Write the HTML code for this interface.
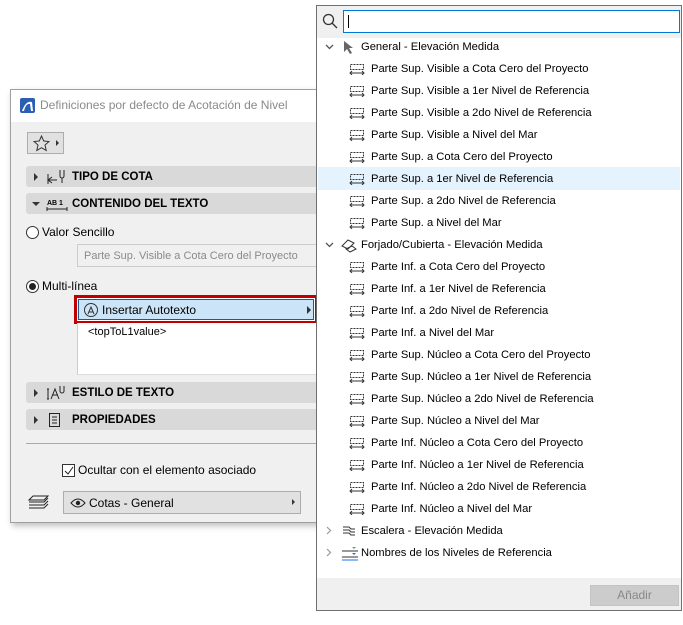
<!DOCTYPE html>
<html><head><meta charset="utf-8"><style>
*{margin:0;padding:0;box-sizing:border-box}
body{width:683px;height:625px;background:#fff;position:relative;overflow:hidden;font-family:"Segoe UI","Liberation Sans",sans-serif;font-size:12px;color:#000}
.a{position:absolute}
.dlg{left:10px;top:89px;width:320px;height:434px;background:#f0f0f0;border:1px solid #a0a0a0;box-shadow:2px 3px 6px rgba(0,0,0,.25)}
.ttl{left:0;top:0;width:100%;height:32px;background:#fff}
.hdr{position:absolute;left:15px;width:310px;height:21px;background:#d9d9d9;border-radius:3px;font-weight:bold;font-size:11.5px;line-height:23px}
.tri{position:absolute;left:8px;top:7px;width:0;height:0;border-left:4px solid #333;border-top:4px solid transparent;border-bottom:4px solid transparent}
.trd{position:absolute;left:6px;top:9px;width:0;height:0;border-top:4px solid #333;border-left:4px solid transparent;border-right:4px solid transparent}
.pop{left:316px;top:5px;width:366px;height:606px;background:#fff;border:1px solid #707070}
.row{position:absolute;left:0;width:364px;height:22px;line-height:22px;font-size:11.2px}
.row span{position:absolute;left:54px}
.grp span{left:44px}
</style></head><body>
<div class="a dlg">
 <div class="a ttl">
  <svg class="a" style="left:9px;top:8px" width="15" height="15"><rect width="15" height="15" rx="2" fill="#2a5fb4"/><path d="M2 13 Q6 2 12 4 L13 13 L11 13 L10 6 Q6 5 4 13Z" fill="#fff"/></svg>
  <div class="a" style="left:29px;top:8px;color:#8a8a8a;font-size:12px">Definiciones por defecto de Acotación de Nivel</div>
 </div>
 <div class="a" style="left:16px;top:42px;width:37px;height:22px;border:1px solid #adadad;background:#e1e1e1">
  <svg class="a" style="left:5px;top:2px" width="17" height="17"><path d="M8.5 1 L10.7 6 L16 6.5 L12 10 L13.2 15.5 L8.5 12.7 L3.8 15.5 L5 10 L1 6.5 L6.3 6Z" fill="none" stroke="#333"/></svg>
  <div class="tri" style="left:28px;top:7px;border-left-width:3px;border-top-width:3px;border-bottom-width:3px"></div>
 </div>
 <div class="hdr" style="top:76px"><div class="tri"></div>
  <svg class="a" style="left:20px;top:3px" width="22" height="16"><path d="M2 5v10M2 11h9M6 8l-4 3 4 3M14 1v6a2 2 0 0 0 4 0V1M16 9v5" fill="none" stroke="#222"/></svg>
  <span style="position:absolute;left:46px">TIPO DE COTA</span></div>
 <div class="hdr" style="top:103px"><div class="trd"></div>
  <svg class="a" style="left:20px;top:3px" width="22" height="16"><text x="1" y="9" font-size="7" font-family="Liberation Sans">AB 1</text><path d="M1 13h20M1 11v4M21 11v4" stroke="#222" fill="none"/></svg>
  <span style="position:absolute;left:46px">CONTENIDO DEL TEXTO</span></div>
 <div class="a" style="left:15px;top:136px;width:13px;height:13px;border:1px solid #333;border-radius:50%;background:#fff"></div>
 <div class="a" style="left:31px;top:135px">Valor Sencillo</div>
 <div class="a" style="left:66px;top:154px;width:260px;height:23px;border:1px solid #ccc;background:#f0f0f0;color:#8a8a8a;font-size:11px;line-height:23px;padding-left:6px">Parte Sup. Visible a Cota Cero del Proyecto</div>
 <div class="a" style="left:15px;top:190px;width:13px;height:13px;border:1px solid #333;border-radius:50%;background:#fff"><div class="a" style="left:2px;top:2px;width:7px;height:7px;border-radius:50%;background:#222"></div></div>
 <div class="a" style="left:31px;top:189px">Multi-línea</div>
 <div class="a" style="left:63px;top:205px;width:244px;height:29px;border:3px solid #c00000;background:#fff">
  <div class="a" style="left:1px;top:1px;width:236px;height:21px;background:#cce4f7;border:1px solid #1f5a8f">
   <svg class="a" style="left:4px;top:2px" width="16" height="16"><circle cx="8" cy="8" r="6.5" fill="none" stroke="#333"/><path d="M5 12l3-7 3 7M6 10h4" stroke="#333" fill="none"/></svg>
   <span style="position:absolute;left:23px;top:3px">Insertar Autotexto</span>
   <div class="tri" style="left:228px;top:6px"></div>
  </div>
 </div>
 <div class="a" style="left:66px;top:233px;width:260px;height:52px;background:#fff;border-left:1px solid #ccc;border-bottom:1px solid #ddd"><span style="position:absolute;left:10px;top:3px;font-size:11px">&lt;topToL1value&gt;</span></div>
 <div class="hdr" style="top:292px"><div class="tri"></div>
  <svg class="a" style="left:20px;top:3px" width="22" height="16"><path d="M2 4v10M1 4h2M1 14h2M5 14l4-10 4 10M6 10h6M14 1v5a2 2 0 0 0 4 0V1" stroke="#222" fill="none"/></svg>
  <span style="position:absolute;left:46px">ESTILO DE TEXTO</span></div>
 <div class="hdr" style="top:319px"><div class="tri"></div>
  <svg class="a" style="left:22px;top:3px" width="14" height="16"><rect x="1.5" y="1.5" width="10" height="13" fill="none" stroke="#222"/><path d="M4 5h5M4 8h5M4 11h5" stroke="#222"/></svg>
  <span style="position:absolute;left:46px">PROPIEDADES</span></div>
 <div class="a" style="left:15px;top:353px;width:310px;height:1px;background:#aaa"></div>
 <div class="a" style="left:51px;top:374px;width:13px;height:13px;border:1px solid #333;background:#fff"><svg class="a" style="left:1px;top:1px" width="10" height="10"><path d="M1 5l3 3 5-7" stroke="#222" fill="none"/></svg></div>
 <div class="a" style="left:67px;top:373px">Ocultar con el elemento asociado</div>
 <svg class="a" style="left:17px;top:404px" width="22" height="16"><path d="M5 2h15l-4 4H1zM1 8h15l4-4M1 11h15l4-4M1 14h15l4-4" stroke="#222" fill="none"/></svg>
 <div class="a" style="left:52px;top:401px;width:238px;height:23px;border:1px solid #adadad;background:#e1e1e1">
  <svg class="a" style="left:6px;top:5px" width="16" height="12"><path d="M1 6Q8-2 15 6Q8 14 1 6Z" fill="none" stroke="#222"/><circle cx="8" cy="6" r="2.2" fill="#222"/></svg>
  <span style="position:absolute;left:25px;top:4px">Cotas - General</span>
  <div class="tri" style="left:228px;top:7px;border-left-width:3px;border-top-width:3px;border-bottom-width:3px"></div>
 </div>
</div>

<div class="a pop">
 <div class="a" style="left:0;top:0;width:364px;height:32px;background:#f0f0f0"></div>
 <svg class="a" style="left:5px;top:7px" width="16" height="16"><circle cx="6.5" cy="6.5" r="5" fill="none" stroke="#333" stroke-width="1.3"/><path d="M10 10l5 5" stroke="#333" stroke-width="1.3"/></svg>
 <div class="a" style="left:26px;top:4px;width:337px;height:23px;border:1px solid #0078d7;background:#fff"><div class="a" style="left:4px;top:4px;width:1px;height:13px;background:#000"></div></div>
 <div class="a" style="left:1px;top:161px;width:362px;height:23px;background:#e5f3ff"></div>
 <div id="rows"></div>
 <div class="a" style="left:0;top:572px;width:364px;height:32px;background:#f0f0f0"></div>
 <div class="a" style="left:273px;top:579px;width:89px;height:21px;border:1px solid #c4c4c4;background:#ccc;color:#888;text-align:center;line-height:19px">Añadir</div>
</div>
<script>
var ic='<svg width="16" height="12"><path d="M1.5 1.5h13v5h-13z" fill="none" stroke="#333" stroke-dasharray="2 1"/><path d="M1 10h14M3 8l-2 2 2 2M13 8l2 2-2 2" stroke="#333" fill="none"/></svg>';
var chv='<svg style="position:absolute;left:8px;top:8px" width="9" height="6"><path d="M1 1l3.5 3.5L8 1" stroke="#555" fill="none" stroke-width="1.3"/></svg>';
var chr='<svg style="position:absolute;left:9px;top:6px" width="6" height="9"><path d="M1 1l3.5 3.5L1 8" stroke="#999" fill="none" stroke-width="1.2"/></svg>';
var items=[['g','General - Elevación Medida','<path d="M3 1v11l3-3 3 5 2-1-3-5h4z" fill="#666"/>',chv],
'Parte Sup. Visible a Cota Cero del Proyecto','Parte Sup. Visible a 1er Nivel de Referencia','Parte Sup. Visible a 2do Nivel de Referencia','Parte Sup. Visible a Nivel del Mar','Parte Sup. a Cota Cero del Proyecto','Parte Sup. a 1er Nivel de Referencia','Parte Sup. a 2do Nivel de Referencia','Parte Sup. a Nivel del Mar',
['g','Forjado/Cubierta - Elevación Medida','<path d="M1 8l6-6 6 3-6 6zM5 11l6-3 4 3-6 3z" fill="none" stroke="#333"/>',chv],
'Parte Inf. a Cota Cero del Proyecto','Parte Inf. a 1er Nivel de Referencia','Parte Inf. a 2do Nivel de Referencia','Parte Inf. a Nivel del Mar','Parte Sup. Núcleo a Cota Cero del Proyecto','Parte Sup. Núcleo a 1er Nivel de Referencia','Parte Sup. Núcleo a 2do Nivel de Referencia','Parte Sup. Núcleo a Nivel del Mar','Parte Inf. Núcleo a Cota Cero del Proyecto','Parte Inf. Núcleo a 1er Nivel de Referencia','Parte Inf. Núcleo a 2do Nivel de Referencia','Parte Inf. Núcleo a Nivel del Mar',
['g','Escalera - Elevación Medida','<path d="M2 3h6l2 2h4M2 6h6l2 2h4M2 9h6l2 2h4" stroke="#333" fill="none"/>',chr],
['g','Nombres de los Niveles de Referencia','<path d="M1 5h16M1 11h16" stroke="#333"/><path d="M1 14h16" stroke="#1a73e8"/><path d="M11 7l2 2 2-2z" fill="#1a73e8"/><path d="M11 1h4l-2 2z" fill="#888"/>',chr]];
var h='';items.forEach(function(it,i){var t=30+i*22;
if(typeof it=='string')h+='<div class="row" style="top:'+t+'px">'+ic.replace('<svg','<svg style="position:absolute;left:32px;top:5px"')+'<span>'+it+'</span></div>';
else h+='<div class="row grp" style="top:'+t+'px">'+it[3]+'<svg style="position:absolute;left:24px;top:4px" width="18" height="15">'+it[2]+'</svg><span>'+it[1]+'</span></div>';});
document.getElementById('rows').innerHTML=h;
</script>
</body></html>
